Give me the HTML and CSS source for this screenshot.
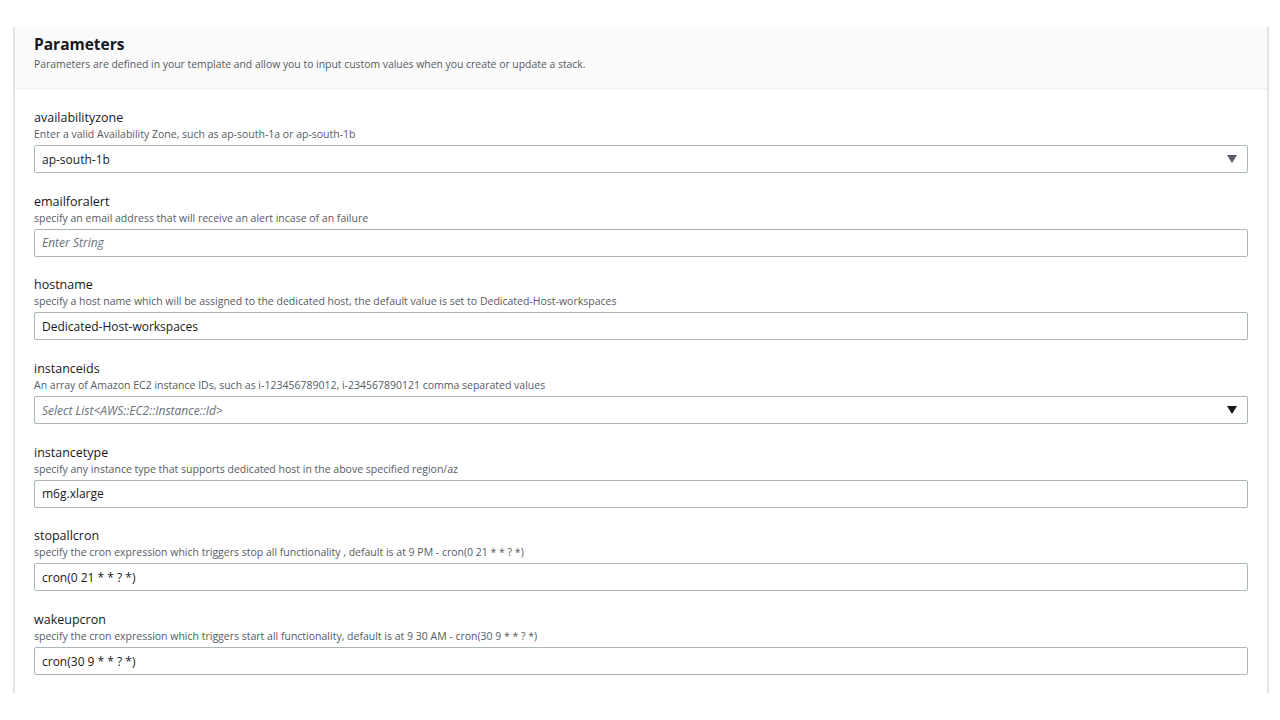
FILE: index.html
```html
<!DOCTYPE html>
<html lang="en">
<head>
    <meta charset="UTF-8">
    <meta name="viewport" content="width=device-width, initial-scale=1.0">
    <title>Specify stack details</title>
    <link rel="stylesheet" href="styles.css">
</head>
<body>
    <main class="page">
        <section class="panel">
            <header class="panel-header">
                <h2>Parameters</h2>
                <p>Parameters are defined in your template and allow you to input custom values when you create or update a stack.</p>
            </header>

            <div class="panel-body">
                <div class="field">
                    <label for="availabilityzone">availabilityzone</label>
                    <p class="hint">Enter a valid Availability Zone, such as ap-south-1a or ap-south-1b</p>
                    <div class="select" id="availabilityzone">
                        <span>ap-south-1b</span>
                        <svg class="caret" width="10" height="8" viewBox="0 0 10 8"><path d="M0 0h10L5 8z"/></svg>
                    </div>
                </div>

                <div class="field">
                    <label for="emailforalert">emailforalert</label>
                    <p class="hint">specify an email address that will receive an alert incase of an failure</p>
                    <input type="text" id="emailforalert" placeholder="Enter String">
                </div>

                <div class="field">
                    <label for="hostname">hostname</label>
                    <p class="hint">specify a host name which will be assigned to the dedicated host, the default value is set to Dedicated-Host-workspaces</p>
                    <input type="text" id="hostname" value="Dedicated-Host-workspaces">
                </div>

                <div class="field">
                    <label for="instanceids">instanceids</label>
                    <p class="hint">An array of Amazon EC2 instance IDs, such as i-123456789012, i-234567890121 comma separated values</p>
                    <div class="select" id="instanceids">
                        <span class="placeholder">Select List&lt;AWS::EC2::Instance::Id&gt;</span>
                        <svg class="caret dark" width="10" height="8" viewBox="0 0 10 8"><path d="M0 0h10L5 8z"/></svg>
                    </div>
                </div>

                <div class="field">
                    <label for="instancetype">instancetype</label>
                    <p class="hint">specify any instance type that supports dedicated host in the above specified region/az</p>
                    <input type="text" id="instancetype" value="m6g.xlarge">
                </div>

                <div class="field">
                    <label for="stopallcron">stopallcron</label>
                    <p class="hint">specify the cron expression which triggers stop all functionality , default is at 9 PM - cron(0 21 * * ? *)</p>
                    <input type="text" id="stopallcron" value="cron(0 21 * * ? *)">
                </div>

                <div class="field">
                    <label for="wakeupcron">wakeupcron</label>
                    <p class="hint">specify the cron expression which triggers start all functionality, default is at 9 30 AM - cron(30 9 * * ? *)</p>
                    <input type="text" id="wakeupcron" value="cron(30 9 * * ? *)">
                </div>
            </div>
        </section>
    </main>
</body>
</html>
```

FILE: styles.css
```css
body {
    margin: 0;
    background-color: #ffffff;
    font-family: 'Open Sans', 'Noto Sans', sans-serif;
    color: #16191f;
}

.page {
    padding: 27px 11px 0 13px;
    height: 693px;
    box-sizing: border-box;
    overflow: hidden;
}

.panel {
    height: 100%;
    border-left: 2px solid #e4e6e6;
    border-right: 2px solid #e4e6e6;
    background-color: #ffffff;
}

.panel-header {
    background-color: #fafafa;
    border-bottom: 1px solid #eeeeee;
    padding: 7px 19px 15px;
}

.panel-header h2 {
    margin: 0;
    font-size: 15.5px;
    line-height: 20px;
    font-weight: 700;
}

.panel-header p {
    margin: 2px 0 0;
    font-size: 10.4px;
    line-height: 17px;
    color: #545b64;
}

.panel-body {
    padding: 21px 19px 0;
}

.field {
    margin-bottom: 20.7px;
}

.field label {
    display: block;
    font-size: 12.5px;
    line-height: 16px;
}

.hint {
    margin: 0 0 3px;
    font-size: 10.5px;
    line-height: 16px;
    color: #545b64;
}

.field input,
.select {
    display: flex;
    align-items: center;
    width: 100%;
    height: 28px;
    box-sizing: border-box;
    padding: 0 7px;
    border: 1px solid #aab7b8;
    border-radius: 2px;
    background-color: #ffffff;
    font-family: inherit;
    font-size: 12px;
    color: #16191f;
    outline: none;
}

.field input::placeholder,
.placeholder {
    font-style: italic;
    color: #687078;
}

.select {
    justify-content: space-between;
    padding-right: 10px;
}

.caret {
    fill: #545b64;
}

.caret.dark {
    fill: #16191f;
}
```
